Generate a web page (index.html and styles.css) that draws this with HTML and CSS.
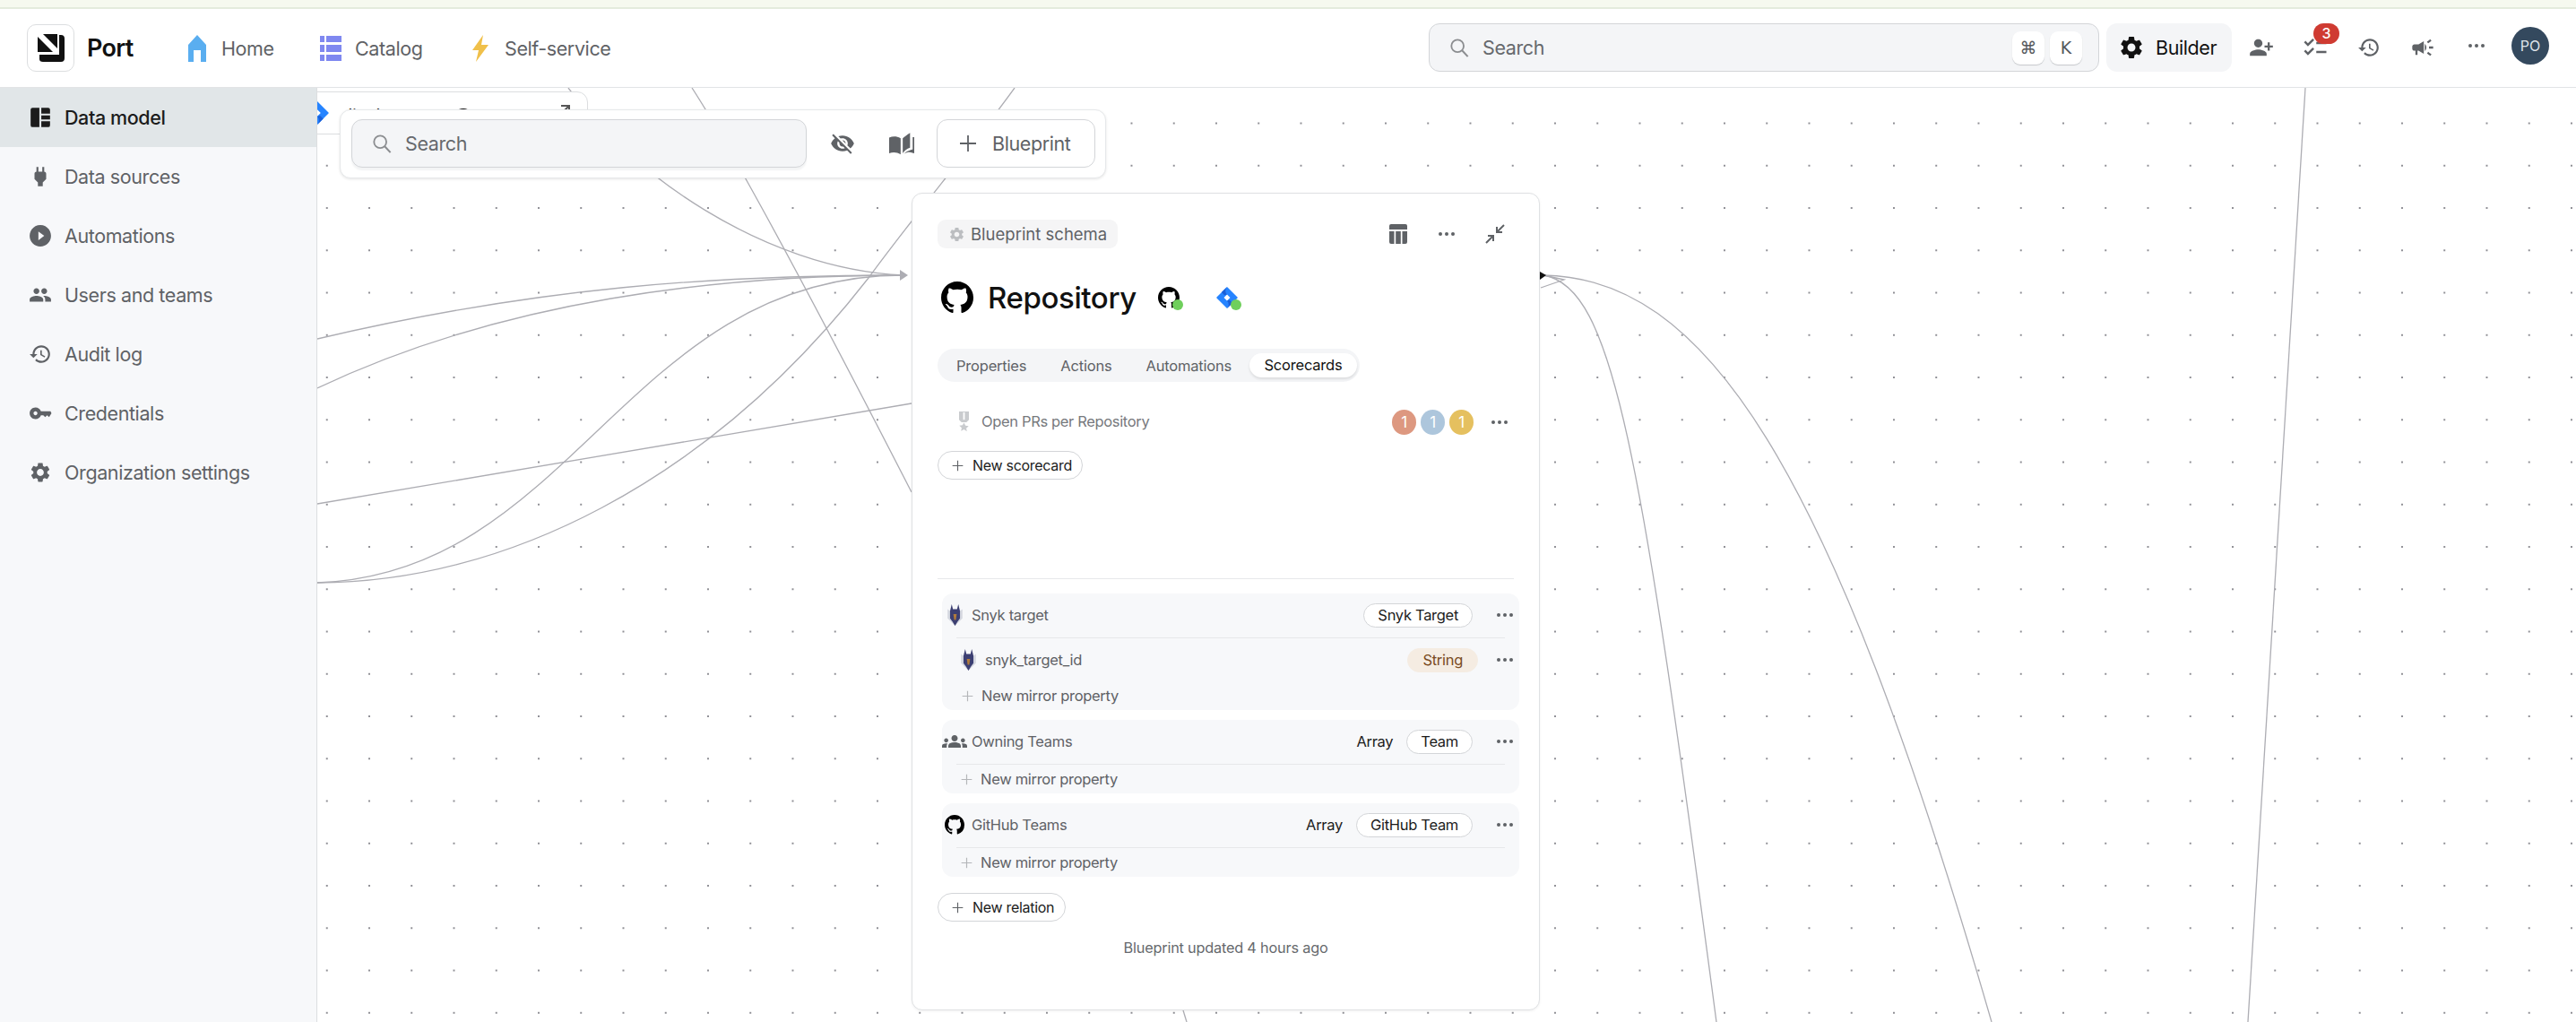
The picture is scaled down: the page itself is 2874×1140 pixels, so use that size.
FILE: index.html
```html
<!DOCTYPE html>
<html lang="en">
<head>
    <meta charset="UTF-8">
    <title>Port - Data model</title>
    <link rel="stylesheet" href="styles.css">
</head>
<body>
    <svg class="defs" aria-hidden="true">
        <defs>
            <symbol id="i-github" viewBox="0 0 16 16"><path fill-rule="evenodd" d="M8 0C3.58 0 0 3.58 0 8c0 3.54 2.29 6.53 5.47 7.59.4.07.55-.17.55-.38 0-.19-.01-.82-.01-1.49-2.01.37-2.53-.49-2.69-.94-.09-.23-.48-.94-.82-1.13-.28-.15-.68-.52-.01-.53.63-.01 1.08.58 1.23.82.72 1.21 1.87.87 2.33.66.07-.52.28-.87.51-1.07-1.78-.2-3.64-.89-3.64-3.95 0-.87.31-1.59.82-2.15-.08-.2-.36-1.02.08-2.12 0 0 .67-.21 2.2.82.64-.18 1.32-.27 2-.27.68 0 1.36.09 2 .27 1.53-1.04 2.2-.82 2.2-.82.44 1.1.16 1.92.08 2.12.51.56.82 1.27.82 2.15 0 3.07-1.87 3.75-3.65 3.95.29.25.54.73.54 1.48 0 1.07-.01 1.93-.01 2.2 0 .21.15.46.55.38A8.013 8.013 0 0016 8c0-4.42-3.58-8-8-8z"/></symbol>
            <symbol id="i-gear" viewBox="0 0 24 24"><path d="M19.14 12.94c.04-.3.06-.61.06-.94 0-.32-.02-.64-.07-.94l2.03-1.58c.18-.14.23-.41.12-.61l-1.92-3.32c-.12-.22-.37-.29-.59-.22l-2.39.96c-.5-.38-1.03-.7-1.62-.94l-.36-2.54c-.04-.24-.24-.41-.48-.41h-3.84c-.24 0-.43.17-.47.41l-.36 2.54c-.59.24-1.13.57-1.62.94l-2.39-.96c-.22-.08-.47 0-.59.22L2.74 8.87c-.12.21-.08.47.12.61l2.03 1.58c-.05.3-.09.63-.09.94s.02.64.07.94l-2.03 1.58c-.18.14-.23.41-.12.61l1.92 3.32c.12.22.37.29.59.22l2.39-.96c.5.38 1.03.7 1.62.94l.36 2.54c.05.24.24.41.48.41h3.84c.24 0 .44-.17.47-.41l.36-2.54c.59-.24 1.13-.56 1.62-.94l2.39.96c.22.08.47 0 .59-.22l1.92-3.32c.12-.22.07-.47-.12-.61l-2.01-1.58zM12 15.6c-1.98 0-3.6-1.62-3.6-3.6s1.62-3.6 3.6-3.6 3.6 1.62 3.6 3.6-1.62 3.6-3.6 3.6z"/></symbol>
            <symbol id="i-history" viewBox="0 0 24 24"><path d="M13 3c-4.97 0-9 4.03-9 9H1l3.89 3.89.07.14L9 12H6c0-3.87 3.13-7 7-7s7 3.13 7 7-3.13 7-7 7c-1.93 0-3.68-.79-4.94-2.06l-1.42 1.42C8.27 19.99 10.51 21 13 21c4.97 0 9-4.03 9-9s-4.03-9-9-9zm-1 5v5l4.28 2.54.72-1.21-3.5-2.08V8H12z"/></symbol>
            <symbol id="i-search" viewBox="0 0 24 24"><circle cx="10" cy="10" r="7.5" fill="none" stroke="currentColor" stroke-width="2"/><path d="M15.5 15.5 22.5 23" fill="none" stroke="currentColor" stroke-width="2.2"/></symbol>
            <symbol id="i-plus" viewBox="0 0 20 20"><path d="M10 1v18M1 10h18" fill="none" stroke="currentColor" stroke-width="1.8"/></symbol>
            <symbol id="i-dots" viewBox="0 0 18 4"><circle cx="2" cy="2" r="2"/><circle cx="9" cy="2" r="2"/><circle cx="16" cy="2" r="2"/></symbol>
            <symbol id="i-jira" viewBox="0 0 26 26"><path fill="#2684ff" d="M13 0 25.5 12.4a.9.9 0 0 1 0 1.2L13 26 .5 13.6a.9.9 0 0 1 0-1.2zM13 9.2 9.2 13l3.8 3.8 3.8-3.8z"/><path fill="#1b5fd6" d="M13 9.2a6.4 6.4 0 0 1 0-9.2L6.4 6.6 9.9 10z"/><path fill="#1b5fd6" d="M13 16.8a6.4 6.4 0 0 1 0 9.2l6.6-6.6-3.5-3.4z"/></symbol>
            <symbol id="i-snyk" viewBox="0 0 18 26"><path fill="#d5d8e0" d="M0 6v11l9 9 9-9V6l-3 2H3z"/><path fill="#3c3f72" d="M5 0 6.500 6h5L13 0l2 8v9l-3 4-3 5-3-5-3-4V8z"/><path fill="#b07a3c" d="M7 12h4l-1 7H8z"/></symbol>
        </defs>
    </svg>

    <div class="top-strip"></div>

    <header class="topbar">
        <div class="logo">
            <svg class="logo-mark" viewBox="0 0 30 31">
                <path fill="#111" d="M0 3v17h17zM6 0h16v16z"/>
                <path fill="#111" d="M24 1h2q4 0 4 4v22q0 4-4 4H6q-4 0-4-3v-5h22z"/>
            </svg>
        </div>
        <span class="brand">Port</span>
        <nav class="nav">
            <a class="nav-item nav-home">
                <svg class="nav-icon-home" viewBox="0 0 20 30"><path fill="#5aaef0" d="M10 0 20 11v19h-6V17H6v13H0V11z"/></svg>
                Home
            </a>
            <a class="nav-item nav-catalog">
                <svg class="nav-icon-catalog" viewBox="0 0 24 28"><path fill="#7f88f0" d="M0 0h5v7H0zM7 0h17v7H7zM0 10h5v8H0zM7 10h17v8H7zM0 21h5v7H0zM7 21h17v7H7z"/></svg>
                Catalog
            </a>
            <a class="nav-item nav-self">
                <svg class="nav-icon-bolt" viewBox="0 0 18 30"><path fill="#f0c04a" d="M12 0 0 17h7L4 30 18 11h-8z"/></svg>
                Self-service
            </a>
        </nav>
        <div class="global-search">
            <svg class="search-icon"><use href="#i-search"/></svg>
            <span class="search-text">Search</span>
            <kbd class="key key-cmd">⌘</kbd>
            <kbd class="key">K</kbd>
        </div>
        <button class="builder-btn">
            <svg class="builder-gear"><use href="#i-gear"/></svg>
            Builder
        </button>
        <div class="tools">
            <span class="tool-slot">
                <svg class="tool tool-add" viewBox="0 0 24 24"><path d="M15 12c2.21 0 4-1.790 4-4s-1.790-4-4-4-4 1.790-4 4 1.790 4 4 4zm-9-2V7H4v3H1v2h3v3h2v-3h3v-2H6zm9 4c-2.670 0-8 1.340-8 4v2h16v-2c0-2.660-5.330-4-8-4z"/></svg>
            </span>
            <span class="tool-slot">
                <svg class="tool tool-check" viewBox="0 0 24 24"><path d="M22 7h-9v2h9V7zm0 8h-9v2h9v-2zM5.540 11 2 7.460l1.410-1.410 2.120 2.120 4.240-4.240 1.410 1.410L5.540 11zm0 8L2 15.460l1.410-1.410 2.120 2.120 4.240-4.240 1.410 1.410L5.540 19z"/></svg>
                <span class="badge">3</span>
            </span>
            <span class="tool-slot">
                <svg class="tool tool-history"><use href="#i-history"/></svg>
            </span>
            <span class="tool-slot">
                <svg class="tool" viewBox="0 0 24 24"><path d="M18 11v2h4v-2h-4zm-2 6.610c.96.710 2.210 1.650 3.200 2.390.4-.53.8-1.070 1.200-1.600-.99-.74-2.240-1.680-3.200-2.400-.4.54-.8 1.080-1.200 1.610zM20.400 5.600c-.4-.53-.8-1.070-1.200-1.600-.99.74-2.240 1.680-3.200 2.400.4.53.8 1.070 1.200 1.600.96-.72 2.210-1.650 3.200-2.400zM4 9c-1.100 0-2 .9-2 2v2c0 1.100.9 2 2 2h1v4h2v-4h1l5 3V6L8 9H4zm11.500 3c0-1.330-.58-2.530-1.500-3.350v6.690c.92-.81 1.500-2.010 1.500-3.340z"/></svg>
            </span>
            <span class="tool-slot">
                <svg class="dots"><use href="#i-dots"/></svg>
            </span>
            <span class="tool-slot">
                <span class="avatar">PO</span>
            </span>
        </div>
    </header>

    <div class="main">
        <aside class="sidebar">
            <a class="side-item active">
                <svg class="side-icon" viewBox="0 0 24 24"><path d="M2 4q0-2 2-2h7v20H4q-2 0-2-2zM13 2h7q2 0 2 2v4h-9zM13 10h9v4h-9zM13 16h9v4q0 2-2 2h-7z"/></svg>
                Data model
            </a>
            <a class="side-item">
                <svg class="side-icon" viewBox="0 0 24 24"><path d="M16 7V2h-2v5h-4V2H8v5h-.01C6.900 7 6 7.900 6 8.990v5.490L9.500 18v4h5v-4l3.500-3.510v-5.500c0-1.100-.9-2-2-2z"/></svg>
                Data sources
            </a>
            <a class="side-item">
                <svg class="side-icon" viewBox="0 0 24 24"><path d="M12 1C5.920 1 1 5.920 1 12s4.920 11 11 11 11-4.920 11-11S18.080 1 12 1zm-2 15.500v-9l6 4.500-6 4.500z"/></svg>
                Automations
            </a>
            <a class="side-item">
                <svg class="side-icon" viewBox="0 0 24 24"><path d="M16 11c1.660 0 2.990-1.340 2.990-3S17.660 5 16 5c-1.660 0-3 1.340-3 3s1.340 3 3 3zm-8 0c1.660 0 2.990-1.340 2.990-3S9.660 5 8 5C6.340 5 5 6.340 5 8s1.340 3 3 3zm0 2c-2.330 0-7 1.170-7 3.500V19h14v-2.500c0-2.330-4.670-3.500-7-3.500zm8 0c-.29 0-.62.02-.97.05 1.160.84 1.970 1.970 1.970 3.450V19h6v-2.500c0-2.330-4.670-3.500-7-3.500z"/></svg>
                Users and teams
            </a>
            <a class="side-item">
                <svg class="side-icon"><use href="#i-history"/></svg>
                Audit log
            </a>
            <a class="side-item">
                <svg class="side-icon" viewBox="0 0 24 24"><path d="M12.650 10C11.830 7.670 9.610 6 7 6c-3.310 0-6 2.690-6 6s2.690 6 6 6c2.610 0 4.830-1.670 5.650-4H15l2 2 2-2 2 2 2.500-4-1-2H12.650zM7 14c-1.100 0-2-.9-2-2s.9-2 2-2 2 .9 2 2-.9 2-2 2z"/></svg>
                Credentials
            </a>
            <a class="side-item">
                <svg class="side-icon"><use href="#i-gear"/></svg>
                Organization settings
            </a>
        </aside>

        <section class="canvas">
            <svg class="edges" viewBox="354 98 2520 1042">
                <g fill="none" stroke="#adadb3" stroke-width="1.300">
                    <path d="M354 378C600 320 800 307 1008 307"/>
                    <path d="M354 433C560 335 800 307 1008 307"/>
                    <path d="M354 650C640 640 700 307 1008 307"/>
                    <path d="M354 650C560 650 790 540 969 310C1020 240 1080 170 1132 98"/>
                    <path d="M354 562 1017 450"/>
                    <path d="M634 98C700 190 850 300 1008 307"/>
                    <path d="M772 98Q838 200 1017 549"/>
                    <path d="M1320 1127 1324 1140"/>
                    <path d="M1722 307C1800 320 1830 500 1915 1140"/>
                    <path d="M1722 307C1900 310 2040 510 2222 1140"/>
                    <path d="M1722 307 1745 312 1719 321"/>
                    <path d="M2572 98 2508 1140"/>
                </g>
                <path d="M1004 301 1013 307 1004 313z" fill="#adadb3"/>
                <path d="M1718 303 1725 307 1718 312z" fill="#111"/>
            </svg>

            <div class="hidden-node">
                <svg class="hidden-node-jira"><use href="#i-jira"/></svg>
                <span class="hidden-node-name">Jira Issue</span>
                <svg class="hidden-node-gh"><use href="#i-github"/></svg>
                <svg class="hidden-node-arrow" viewBox="0 0 14 14"><path d="M3 2h9v9M12 2 2 12" fill="none" stroke="#555" stroke-width="2"/></svg>
            </div>

            <div class="toolbar">
                <div class="tb-search">
                    <svg class="search-icon"><use href="#i-search"/></svg>
                    <span class="search-text">Search</span>
                </div>
                <svg class="tb-icon tb-eye" viewBox="0 0 24 24"><path d="M12 7c2.760 0 5 2.240 5 5 0 .65-.13 1.260-.36 1.830l2.920 2.920c1.510-1.260 2.700-2.890 3.430-4.750-1.730-4.390-6-7.500-11-7.500-1.400 0-2.740.25-3.980.7l2.160 2.160C10.740 7.130 11.350 7 12 7zM2 4.270l2.280 2.280.46.46C3.080 8.300 1.780 10.020 1 12c1.730 4.390 6 7.500 11 7.500 1.550 0 3.030-.3 4.380-.84l.42.42L19.730 22 21 20.730 3.270 3 2 4.270zM7.530 9.800l1.550 1.550c-.05.21-.08.43-.08.65 0 1.660 1.340 3 3 3 .22 0 .44-.03.65-.08l1.550 1.550c-.67.33-1.410.53-2.200.53-2.760 0-5-2.240-5-5 0-.79.2-1.530.53-2.200zm4.310-.78l3.150 3.150.02-.16c0-1.660-1.340-3-3-3l-.17.01z"/></svg>
                <svg class="tb-icon tb-book" viewBox="0 0 24 24"><path d="M0 6.500c3.500-1.500 7-1.500 11 .5v15.500C7.500 20.500 4 20 0 21.500zM13 7c1.500-1 3.500-2.800 7-5v14c-3 1-5.500 2.800-7 5.500zM22.500 6H24v15.500c-3.500-1.500-6.500-1.500-10 .5 2.500-2.500 5.500-3.500 8.500-4.500z"/></svg>
                <button class="tb-add">
                    <svg class="tb-plus"><use href="#i-plus"/></svg>
                    Blueprint
                </button>
            </div>

            <article class="panel">
                <div class="panel-head">
                    <span class="chip">
                        <svg class="chip-gear"><use href="#i-gear"/></svg>
                        Blueprint schema
                    </span>
                    <svg class="head-icon head-table" viewBox="0 0 20 22"><path d="M2 0h16q2 0 2 2v4H0V2q0-2 2-2zM0 8h5.500v14H2q-2 0-2-2zM7.200 8h5.600v14H7.200zM14.500 8H20v12q0 2-2 2h-3.500z"/></svg>
                    <svg class="dots head-dots"><use href="#i-dots"/></svg>
                    <svg class="head-icon head-collapse" viewBox="0 0 22 22"><path d="M21 1 13 9M13 3v6h6M1 21l8-8M3 13h6v6" fill="none" stroke="#5f6266" stroke-width="2"/></svg>
                </div>

                <div class="title-row">
                    <svg class="title-gh"><use href="#i-github"/></svg>
                    <h1 class="title">Repository</h1>
                    <span class="source source-gh">
                        <svg class="source-icon"><use href="#i-github"/></svg>
                        <span class="source-dot"></span>
                    </span>
                    <span class="source source-jira">
                        <svg class="source-icon"><use href="#i-jira"/></svg>
                        <span class="source-dot"></span>
                    </span>
                </div>

                <div class="tabs">
                    <span class="tab tab-props">Properties</span>
                    <span class="tab tab-actions">Actions</span>
                    <span class="tab tab-autos">Automations</span>
                    <span class="tab tab-active">Scorecards</span>
                </div>

                <div class="score-row">
                    <svg class="medal" viewBox="0 0 14 24"><path fill="#c9cbce" d="M1 0h12v10l-3 3H4l-3-3zM7 13.500l1.800 3.700 3.900.5-2.900 2.700.8 3.800L7 21.800l-3.600 1.900.8-3.800-2.900-2.700 3.900-.5z"/><path fill="#fff" d="M6 1h2v9H6z"/></svg>
                    <span class="score-name">Open PRs per Repository</span>
                    <span class="level level-a">1</span>
                    <span class="level level-b">1</span>
                    <span class="level level-c">1</span>
                    <svg class="dots score-dots"><use href="#i-dots"/></svg>
                </div>

                <button class="pill-btn new-scorecard">
                    <svg class="pill-plus"><use href="#i-plus"/></svg>
                    New scorecard
                </button>

                <div class="panel-divider"></div>

                <div class="group group-first">
                    <div class="row">
                        <span class="row-icon"><svg class="snyk"><use href="#i-snyk"/></svg></span>
                        <span class="row-name">Snyk target</span>
                        <span class="tag">Snyk Target</span>
                        <svg class="dots"><use href="#i-dots"/></svg>
                    </div>
                    <div class="row-line"></div>
                    <div class="row row-sub">
                        <span class="row-icon"><svg class="snyk"><use href="#i-snyk"/></svg></span>
                        <span class="row-name">snyk_target_id</span>
                        <span class="tag tag-string">String</span>
                        <svg class="dots"><use href="#i-dots"/></svg>
                    </div>
                    <div class="mirror mirror-first">
                        <svg class="mirror-plus"><use href="#i-plus"/></svg>
                        New mirror property
                    </div>
                </div>

                <div class="group">
                    <div class="row">
                        <span class="row-icon"><svg class="teams" viewBox="0 0 24 24"><path d="M4 13c1.100 0 2-.9 2-2 0-1.100-.9-2-2-2s-2 .9-2 2c0 1.100.9 2 2 2zm1.130 1.100c-.37-.06-.74-.1-1.130-.1-.99 0-1.930.21-2.780.58C.48 14.900 0 15.620 0 16.430V18h4.500v-1.610c0-.83.23-1.610.63-2.290zM20 13c1.100 0 2-.9 2-2 0-1.100-.9-2-2-2s-2 .9-2 2c0 1.100.9 2 2 2zm4 3.430c0-.81-.48-1.530-1.220-1.850-.85-.37-1.790-.58-2.780-.58-.39 0-.76.04-1.130.1.4.68.63 1.460.63 2.290V18H24v-1.570zm-7.760-2.780c-1.170-.52-2.610-.9-4.240-.9-1.630 0-3.070.39-4.240.9C6.680 14.130 6 15.210 6 16.390V18h12v-1.610c0-1.180-.68-2.260-1.760-2.740zM12 12c1.660 0 3-1.340 3-3s-1.340-3-3-3-3 1.340-3 3 1.340 3 3 3z"/></svg></span>
                        <span class="row-name">Owning Teams</span>
                        <span class="array">Array</span>
                        <span class="tag">Team</span>
                        <svg class="dots"><use href="#i-dots"/></svg>
                    </div>
                    <div class="row-line"></div>
                    <div class="mirror">
                        <svg class="mirror-plus"><use href="#i-plus"/></svg>
                        New mirror property
                    </div>
                </div>

                <div class="group">
                    <div class="row">
                        <span class="row-icon"><svg class="row-gh"><use href="#i-github"/></svg></span>
                        <span class="row-name">GitHub Teams</span>
                        <span class="array">Array</span>
                        <span class="tag">GitHub Team</span>
                        <svg class="dots"><use href="#i-dots"/></svg>
                    </div>
                    <div class="row-line"></div>
                    <div class="mirror">
                        <svg class="mirror-plus"><use href="#i-plus"/></svg>
                        New mirror property
                    </div>
                </div>

                <button class="pill-btn new-relation">
                    <svg class="pill-plus"><use href="#i-plus"/></svg>
                    New relation
                </button>

                <p class="updated">Blueprint updated 4 hours ago</p>
            </article>
        </section>
    </div>
</body>
</html>
```

FILE: styles.css
```css
* {
    box-sizing: border-box;
}

html, body {
    margin: 0;
    height: 100%;
}

body {
    width: 2874px;
    height: 1140px;
    overflow: hidden;
    display: flex;
    flex-direction: column;
    background: #fff;
    font-family: Inter, "Noto Sans", sans-serif;
    color: #5f6266;
}

button {
    font: inherit;
    background: none;
    border: 0;
    padding: 0;
}

.defs {
    position: absolute;
    width: 0;
    height: 0;
}

svg {
    fill: currentColor;
    flex: none;
    display: block;
}

.dots {
    width: 18px;
    height: 4px;
    color: #5f6266;
}

/* top */
.top-strip {
    height: 10px;
    background: #f6f9ef;
    border-bottom: 2px solid #e4ebdd;
}

.topbar {
    height: 88px;
    display: flex;
    align-items: center;
    padding-left: 30px;
    border-bottom: 1px solid #e2e4e6;
    flex: none;
}

.logo {
    width: 53px;
    height: 53px;
    border: 1px solid #dcdee0;
    border-radius: 10px;
    display: flex;
    align-items: center;
    justify-content: center;
}

.logo-mark {
    width: 30px;
    height: 31px;
}

.brand {
    margin-left: 14px;
    width: 60px;
    font-size: 27px;
    font-weight: 600;
    letter-spacing: -0.7px;
    color: #111;
}

.nav {
    display: flex;
    align-items: center;
    margin-left: 53px;
}

.nav-item {
    display: flex;
    align-items: center;
    font-size: 21.500px;
    letter-spacing: -0.4px;
}

.nav-icon-home {
    width: 20px;
    height: 30px;
    margin-right: 17px;
}

.nav-icon-catalog {
    width: 24px;
    height: 28px;
    margin-right: 15px;
}

.nav-icon-bolt {
    width: 18px;
    height: 30px;
    margin-right: 18px;
}

.nav-home {
    width: 147px;
}

.nav-catalog {
    width: 170px;
}

.global-search {
    position: absolute;
    left: 1594px;
    top: 26px;
    width: 748px;
    height: 54px;
    display: flex;
    align-items: center;
    padding: 0 18px 0 22px;
    background: #f4f5f7;
    border: 1px solid #d3d5d8;
    border-radius: 12px;
}

.search-icon {
    width: 22px;
    height: 24px;
    color: #8b8d90;
}

.search-text {
    margin-left: 15px;
    font-size: 21.500px;
    letter-spacing: -0.4px;
    color: #66696d;
}

.key {
    width: 36px;
    height: 37px;
    display: flex;
    align-items: center;
    justify-content: center;
    background: #fff;
    border-radius: 9px;
    box-shadow: 0 1px 1px #c6c8cb;
    font-family: "DejaVu Sans", sans-serif;
    font-size: 19px;
    color: #55585c;
}

.key-cmd {
    margin-left: auto;
    margin-right: 6px;
}

.builder-btn {
    position: absolute;
    left: 2350px;
    top: 26px;
    width: 140px;
    height: 54px;
    display: flex;
    align-items: center;
    padding-left: 13px;
    gap: 12px;
    background: #f4f5f7;
    border-radius: 12px;
    font-size: 21.500px;
    letter-spacing: -0.4px;
    color: #111;
}

.builder-gear {
    width: 30px;
    height: 30px;
}

.tools {
    position: absolute;
    left: 2493px;
    top: 30px;
    height: 42px;
    display: flex;
}

.tool-slot {
    position: relative;
    width: 60px;
    height: 42px;
    display: flex;
    align-items: center;
    justify-content: center;
}

.tool {
    color: #5f6266;
    margin-top: 4px;
    width: 28px;
    height: 28px;
}

.tool-add {
    transform: scaleX(-1);
}

.tool-check {
    width: 30px;
    height: 30px;
}

.tool-history {
    width: 26px;
    height: 26px;
}

.badge {
    position: absolute;
    left: 28px;
    top: -4px;
    width: 29px;
    height: 23px;
    border-radius: 12px;
    background: #cf3b32;
    color: #fff;
    font-size: 16px;
    font-weight: 500;
    text-align: center;
    line-height: 23px;
}

.avatar {
    width: 42px;
    height: 42px;
    border-radius: 50%;
    background: #34495e;
    color: #dfe4ea;
    font-size: 16px;
    text-align: center;
    line-height: 42px;
}

/* side */
.main {
    flex: 1;
    display: flex;
    min-height: 0;
}

.sidebar {
    width: 354px;
    flex: none;
    background: #f7f8fa;
    border-right: 1px solid #dcdee0;
}

.side-item {
    height: 66px;
    display: flex;
    align-items: center;
    padding-left: 32px;
    gap: 14px;
    font-size: 21.500px;
    letter-spacing: -0.4px;
}

.side-item.active {
    background: #e1e6e8;
    color: #1c1c1c;
    font-weight: 500;
}

.side-icon {
    width: 26px;
    height: 26px;
}

/* canvas */
.canvas {
    flex: 1;
    position: relative;
    overflow: hidden;
    background-color: #fff;
    background-image: radial-gradient(circle, #8f8f95 1px, transparent 1.300px);
    background-size: 47.250px 47.250px;
    background-position: -12.900px 15.900px;
}

.edges {
    position: absolute;
    left: 0;
    top: 0;
    width: 2520px;
    height: 1042px;
}

.hidden-node {
    position: absolute;
    left: -1px;
    top: 4px;
    width: 303px;
    height: 48px;
    display: flex;
    align-items: center;
    background: #fff;
    border: 1px solid #dcdee0;
    border-radius: 0 12px 12px 0;
    color: #111;
}

.hidden-node-jira {
    width: 26px;
    height: 26px;
    margin-left: -13px;
}

.hidden-node-name {
    margin-left: 16px;
    font-size: 18px;
    margin-top: 4px;
}

.hidden-node-gh {
    width: 24px;
    height: 24px;
    margin-left: 40px;
    margin-top: 14px;
}

.hidden-node-arrow {
    width: 14px;
    height: 14px;
    margin-left: auto;
    margin-right: 18px;
    margin-top: -6px;
}

.toolbar {
    position: absolute;
    left: 25px;
    top: 24px;
    width: 855px;
    height: 77px;
    display: flex;
    align-items: center;
    padding: 0 0 2px 12px;
    background: #fff;
    border: 1px solid #e6e8ea;
    border-radius: 12px;
    box-shadow: 0 1px 3px rgba(0, 0, 0, 0.1);
}

.tb-search {
    width: 508px;
    height: 54px;
    display: flex;
    align-items: center;
    padding-left: 22px;
    background: #f4f5f7;
    border: 1px solid #d3d5d8;
    border-radius: 12px;
    box-shadow: 0 3px 2px #f3f4f5;
}

.tb-icon {
    width: 28px;
    height: 28px;
    color: #5f6266;
}

.tb-eye {
    margin-left: 26px;
}

.tb-book {
    margin-left: 38px;
}

.tb-add {
    margin-left: 25px;
    width: 177px;
    height: 54px;
    display: flex;
    align-items: center;
    padding-left: 24px;
    gap: 17px;
    border: 1px solid #d3d5d8;
    border-radius: 12px;
    font-size: 21.500px;
    letter-spacing: -0.4px;
    color: #5f6266;
}

.tb-plus {
    width: 20px;
    height: 20px;
}

/* panel */
.panel {
    position: absolute;
    left: 663px;
    top: 117px;
    width: 701px;
    height: 912px;
    padding: 29px 28px 0;
    background: #fff;
    border: 1px solid #dfe1e3;
    border-radius: 12px;
    box-shadow: 0 1px 3px rgba(0, 0, 0, 0.06);
}

.panel-head {
    height: 32px;
    display: flex;
    align-items: center;
}

.chip {
    height: 32px;
    width: 201px;
    display: flex;
    align-items: center;
    padding-left: 12px;
    gap: 6px;
    background: #f5f5f6;
    border-radius: 9px;
    font-size: 18.500px;
    letter-spacing: 0;
}

.chip-gear {
    width: 19px;
    height: 19px;
    color: #bcbec1;
}

.head-icon {
    color: #5f6266;
    width: 20px;
    height: 22px;
}

.head-table {
    margin-left: 303px;
}

.head-dots {
    margin-left: 35px;
}

.head-collapse {
    margin-left: 34px;
    width: 22px;
}

.title-row {
    margin-top: 35px;
    height: 40px;
    display: flex;
    align-items: center;
}

.title-gh {
    width: 36px;
    height: 36px;
    margin-left: 4px;
    color: #000;
}

.title {
    margin: 0 0 0 16px;
    width: 190px;
    font-size: 33px;
    font-weight: 500;
    letter-spacing: -0.4px;
    color: #111;
}

.source {
    position: relative;
}

.source-gh {
    width: 24px;
    color: #000;
}

.source-jira {
    margin-left: 41px;
    width: 26px;
}

.source-icon {
    width: 24px;
    height: 26px;
}

.source-dot {
    position: absolute;
    left: 16px;
    top: 15px;
    width: 12px;
    height: 12px;
    border-radius: 50%;
    background: #6fcf5c;
}

.tabs {
    margin-top: 37px;
    width: 471px;
    height: 37px;
    display: flex;
    align-items: center;
    background: #f4f5f7;
    border-radius: 19px;
    font-size: 16.500px;
    letter-spacing: -0.2px;
}

.tab-props {
    margin-left: 21px;
}

.tab-actions {
    margin-left: 38px;
}

.tab-autos {
    margin-left: 38px;
}

.tab-active {
    margin-left: 20px;
    width: 120px;
    height: 27px;
    line-height: 27px;
    text-align: center;
    background: #fff;
    border-radius: 14px;
    box-shadow: 0 2px 3px rgba(0, 0, 0, 0.1);
    color: #111;
}

.score-row {
    margin-top: 30px;
    height: 30px;
    display: flex;
    align-items: center;
    font-size: 16.500px;
    letter-spacing: -0.35px;
    color: #77797d;
}

.medal {
    width: 13px;
    height: 22px;
    margin-left: 23px;
    margin-top: -3px;
}

.score-name {
    margin-left: 13px;
    margin-top: -2px;
}

.level {
    width: 27px;
    height: 28px;
    border-radius: 50%;
    color: #fff;
    font-size: 17px;
    text-align: center;
    line-height: 28px;
    margin-left: 5px;
}

.level-a {
    margin-left: auto;
    background: #dd9880;
}

.level-b {
    background: #adc6dc;
}

.level-c {
    background: #e5c05f;
}

.score-dots {
    margin-left: 20px;
    margin-right: 7px;
}

.pill-btn {
    height: 32px;
    display: flex;
    align-items: center;
    padding-left: 15px;
    gap: 10px;
    border: 1px solid #d3d5d8;
    border-radius: 16px;
    font-size: 16px;
    letter-spacing: -0.3px;
    color: #1c1c1c;
}

.pill-plus {
    width: 13px;
    height: 13px;
    color: #5f6266;
}

.new-scorecard {
    margin-top: 17px;
    width: 162px;
}

.panel-divider {
    margin-top: 110px;
    height: 1px;
    background: #e7e8ea;
}

.group {
    margin: 11px -6px 0 5px;
    background: #f7f8fa;
    border-radius: 12px;
    padding-top: 8px;
    font-size: 16.500px;
    letter-spacing: -0.3px;
}

.group-first {
    margin-top: 16px;
}

.row {
    height: 32px;
    display: flex;
    align-items: center;
    padding-right: 7px;
}

.row-sub {
    margin-top: 8px;
    padding-left: 15px;
}

.row-icon {
    width: 28px;
    display: flex;
    justify-content: center;
    margin-right: 5px;
}

.row-name {
    margin-right: auto;
}

.snyk {
    width: 17px;
    height: 24px;
}

.teams {
    width: 28px;
    height: 28px;
}

.row-gh {
    width: 22px;
    height: 22px;
    color: #000;
}

.array {
    color: #1c1c1c;
    margin-right: 15px;
}

.tag {
    height: 27px;
    line-height: 25px;
    padding: 0 15px;
    background: #fff;
    border: 1px solid #d3d5d8;
    border-radius: 14px;
    color: #1c1c1c;
    margin-right: 27px;
}

.tag-string {
    background: #f5ece2;
    border-color: #f5ece2;
    color: #7a4b22;
    padding: 0 16px;
    margin-right: 21px;
}

.row-line {
    margin: 9px 16px 0;
    height: 1px;
    background: #e7e8ea;
}

.mirror {
    height: 32px;
    display: flex;
    align-items: center;
    padding-left: 21px;
    gap: 9px;
}

.mirror-first {
    margin-top: 8px;
    padding-left: 22px;
}

.mirror-plus {
    width: 13px;
    height: 13px;
    color: #b4b6b9;
}

.new-relation {
    margin-top: 18px;
    width: 143px;
}

.updated {
    margin: 17px 0 0;
    line-height: 24px;
    text-align: center;
    font-size: 16.300px;
    letter-spacing: -0.2px;
    color: #66696d;
}
```
